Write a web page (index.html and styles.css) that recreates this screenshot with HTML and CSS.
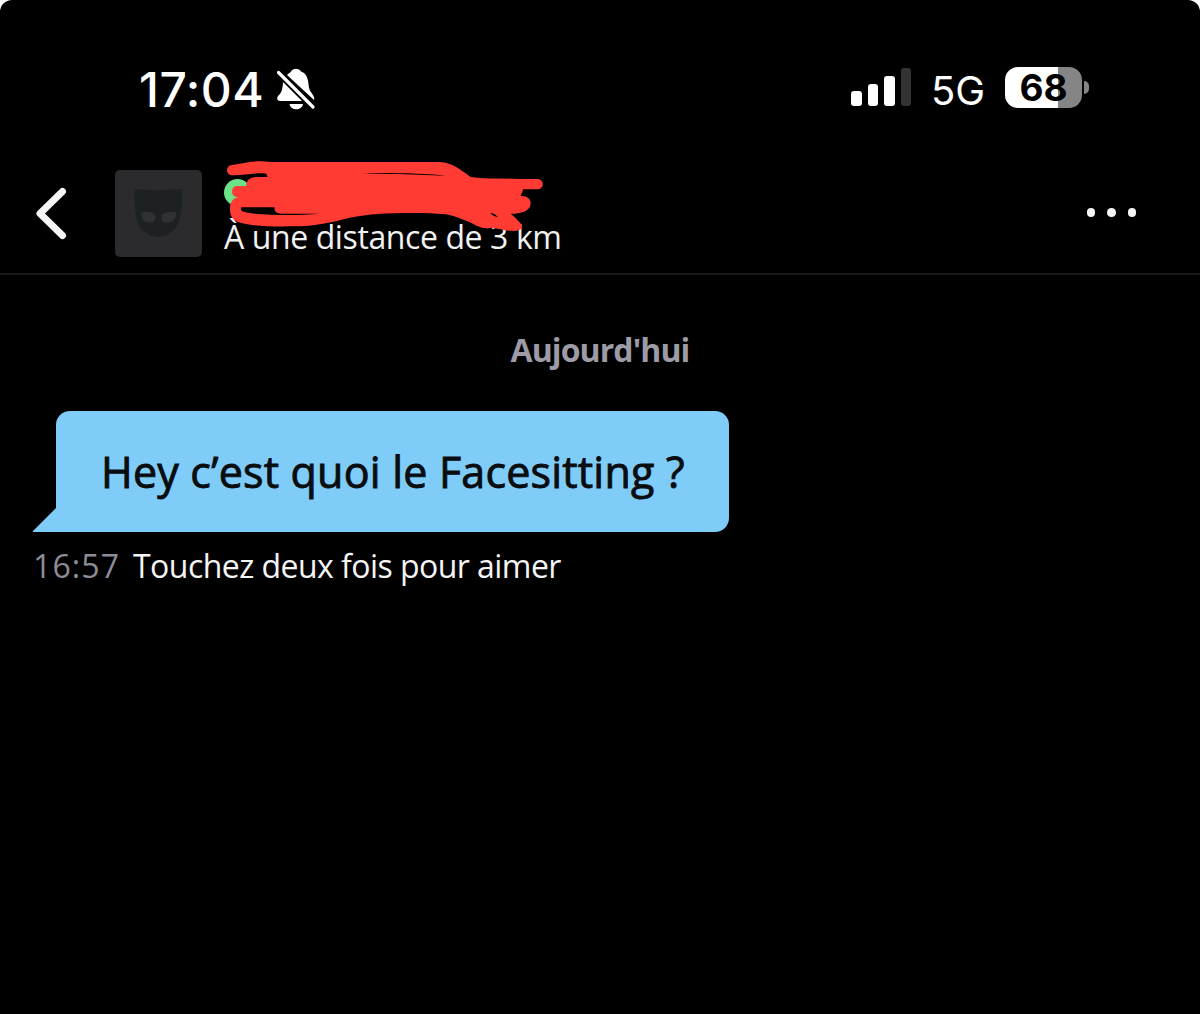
FILE: index.html
```html
<!DOCTYPE html>
<html lang="fr">
    <head>
        <meta charset="utf-8">
        <title>Conversation</title>
        <link rel="stylesheet" href="styles.css">
    </head>
    <body>
        <div class="screen">
            <div class="status-bar">
                <div class="status-left">
                    <span class="clock">17:04</span>
                    <svg class="bell" width="42" height="44" viewBox="0 0 42 44">
                        <path fill="#fff" d="M12 7C14 5 15 5 16 3.500C18-.2 24-.2 26 3.500C31 5 33 10 33.500 16C33.800 22 36 24 38 27C39 29 39.500 30 39 32L12 7Z"/>
                        <path fill="#fff" d="M8 12L28 33H5C1.500 33 1.500 29 4 27C6 25 8 22 8 12ZM14.500 36H28C27 43 15.500 43 14.500 36Z"/>
                        <path stroke="#000" stroke-width="7" d="M3 4L38 39"/>
                        <path stroke="#fff" stroke-width="3.200" stroke-linecap="round" d="M3.500 4.500L38 39"/>
                    </svg>
                </div>
                <div class="status-right">
                    <div class="signal">
                        <span class="bar bar1"></span>
                        <span class="bar bar2"></span>
                        <span class="bar bar3"></span>
                        <span class="bar bar4"></span>
                    </div>
                    <span class="network">5G</span>
                    <div class="battery">68</div>
                    <div class="battery-cap"></div>
                </div>
            </div>
            <div class="header">
                <svg class="back" width="34" height="56" viewBox="0 0 34 56">
                    <path fill="none" stroke="#f5f5f5" stroke-width="7" stroke-linecap="round" stroke-linejoin="round" d="M27.500 6.500L5 28.500L27.500 50.500"/>
                </svg>
                <div class="avatar">
                    <svg width="49" height="51" viewBox="0 0 49 51">
                        <path fill="#1e2123" d="M1 1C15 2.500 33 2.500 48 1C49 15 47 30 43 38C39 45 31 48 24.500 49.500C17 48 9 45 5 38C1 30 0 15 1 1Z"/>
                        <path fill="#303134" d="M8 24.500C12 23 18 24 20.500 26.500C23 31 20 35 16 34.500C10 35 6 30 8 24.500ZM42 24.500C38 23 31 24 28.500 26.500C26 31 29 35 33 34.500C39 35 43 30 42 24.500Z"/>
                    </svg>
                </div>
                <div class="contact">
                    <span class="online"></span>
                    <span class="distance">À une distance de 3 km</span>
                    <svg class="scribble" width="360" height="120" viewBox="0 0 1080 360">
                        <path fill="#ff3b34" d="M66 45C95 41 115 34 145 34C163 34 170 36 190 36H690C728 38 755 62 782 81C830 88 875 84 925 87H983A15 15 0 0 1 983 118H939C938 126 935 132 931 138C953 137 963 149 962 161C960 184 933 191 902 191C914 201 926 213 934 223C940 237 928 243 915 243C886 244 862 233 842 233C822 240 798 227 780 217C740 200 720 191 680 191C600 188 500 187 420 203C360 218 320 228 250 229C175 230 112 228 79 214C60 204 58 181 61 165C64 151 72 144 87 141H79A17 17 0 0 1 79 108H109C108 91 120 82 138 81H173L169 71C137 67 108 77 67 76C46 76 46 47 66 45Z"/>
                        <path fill="#000" d="M94 172H194C192 184 200 190 214 191H330C270 197 190 196 135 191C105 188 87 185 94 172ZM451 70C530 68 650 70 708 77C650 75 600 73 540 72ZM840 190C850 189 858 194 864 202C854 199 846 196 840 190Z"/>
                    </svg>
                </div>
                <div class="more">
                    <span class="dot"></span>
                    <span class="dot"></span>
                    <span class="dot"></span>
                </div>
            </div>
            <div class="chat">
                <div class="day">Aujourd'hui</div>
                <div class="message">
                    <svg class="tail" width="23" height="24" viewBox="0 0 23 24">
                        <path fill="#80ccf8" d="M23 0V24H0V23Z"/>
                    </svg>
                    <div class="bubble">Hey c’est quoi le Facesitting ?</div>
                </div>
                <div class="info">
                    <span class="time">16:57</span>
                    <span class="hint">Touchez deux fois pour aimer</span>
                </div>
            </div>
        </div>
    </body>
</html>
```
FILE: styles.css
```css
body {
    margin: 0;
    background-color: #fff;
    font-family: "Open Sans", "Noto Sans", sans-serif;
}
.screen {
    height: 1014px;
    background-color: #000;
    border-radius: 12px 12px 0 0;
    overflow: hidden;
    white-space: nowrap;
}
.status-bar {
    display: flex;
    justify-content: space-between;
    box-sizing: border-box;
    height: 152px;
    padding: 67px 111px 0 139px;
    color: #fff;
    font-family: Inter, sans-serif;
}
.status-left {
    display: flex;
    height: 44px;
}
.clock {
    width: 136px;
    font-size: 48px;
    font-weight: 500;
    letter-spacing: 0.5px;
    line-height: 46px;
}
.bell {
    margin-top: 1px;
}
.status-right {
    display: flex;
    height: 42px;
}
.signal {
    display: flex;
    align-items: flex-end;
    gap: 6px;
    height: 39px;
}
.bar {
    width: 10.5px;
    border-radius: 3px;
    background-color: #fff;
}
.bar1 {
    height: 15px;
}
.bar2 {
    height: 22px;
}
.bar3 {
    height: 30px;
}
.bar4 {
    height: 38px;
    background-color: #333;
}
.network {
    width: 74px;
    margin-left: 20px;
    font-size: 40px;
    line-height: 47px;
}
.battery {
    width: 77px;
    height: 41px;
    border-radius: 13px;
    background: linear-gradient(90deg, #fff 53px, #858585 53px);
    color: #000;
    font-size: 37px;
    font-weight: 700;
    line-height: 42px;
    text-align: center;
}
.battery-cap {
    width: 5px;
    height: 13px;
    margin: 14px 0 0 2px;
    border-radius: 0 5px 5px 0;
    background-color: #858585;
}
.header {
    display: flex;
    box-sizing: border-box;
    height: 123px;
    padding: 18px 64px 0 35px;
    border-bottom: 2px solid #19191b;
}
.back {
    margin-top: 15px;
}
.avatar {
    display: flex;
    align-items: center;
    justify-content: center;
    width: 87px;
    height: 87px;
    margin-left: 46px;
    border-radius: 5px;
    background-color: #2b2b2d;
}
.contact {
    position: relative;
    display: flex;
    flex-direction: column;
    padding: 9px 0 0 22px;
}
.online {
    width: 27px;
    height: 27px;
    border-radius: 50%;
    background-color: #6be386;
}
.distance {
    margin-top: 9px;
    color: #f2f2f2;
    font-size: 32px;
    letter-spacing: -0.4px;
    line-height: 44px;
}
.scribble {
    position: absolute;
    left: 8px;
    top: -20px;
}
.more {
    display: flex;
    gap: 12px;
    margin: 38px 0 0 auto;
}
.dot {
    width: 8.5px;
    height: 8.5px;
    border-radius: 50%;
    background-color: #f5f5f5;
}
.chat {
    padding: 53px 33px 0;
}
.day {
    color: #9c9ba6;
    font-size: 32px;
    font-weight: 700;
    letter-spacing: -0.9px;
    line-height: 44px;
    text-align: center;
}
.message {
    display: flex;
    align-items: flex-end;
    margin-top: 39px;
}
.bubble {
    box-sizing: border-box;
    width: 673px;
    height: 121px;
    padding-left: 45px;
    border-radius: 14px 14px 14px 0;
    background-color: #80ccf8;
    color: #090d10;
    font-size: 43px;
    letter-spacing: 0.2px;
    line-height: 121px;
    -webkit-text-stroke: 0.9px #090d10;
}
.info {
    display: flex;
    margin-top: 12px;
    font-size: 32px;
    line-height: 44px;
}
.time {
    width: 100px;
    color: #8e8d97;
    letter-spacing: 1.1px;
}
.hint {
    color: #f5f5f5;
    letter-spacing: -0.54px;
}
```
